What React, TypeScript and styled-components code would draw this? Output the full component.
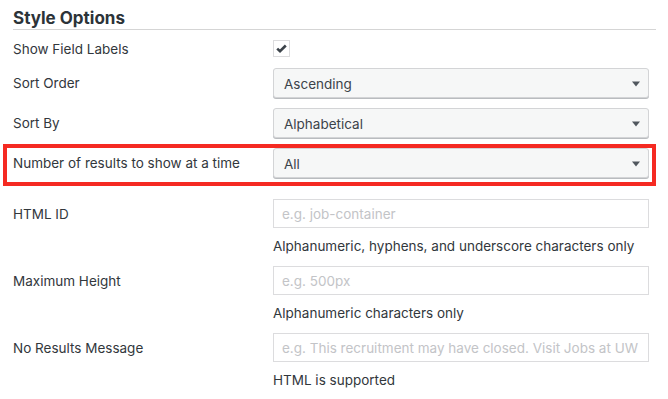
import styled, { createGlobalStyle } from 'styled-components';

const GlobalStyle = createGlobalStyle`
  body {
    margin: 0;
    background: #fff;
    font-family: Inter, "Noto Sans", sans-serif;
    color: #3c434a;
  }
`;

const Panel = styled.div`
  padding: 0 12px 0 13px;
`;

const Heading = styled.h2`
  margin: 0;
  padding-top: 8px;
  padding-bottom: 1px;
  font-size: 17px;
  line-height: 20px;
  font-weight: 700;
  color: #2c3338;
  border-bottom: 1px solid #d5d5d5;
`;

const Form = styled.div`
  display: flex;
  flex-direction: column;
  gap: 10px;
  padding-top: 9px;
`;

const Row = styled.div<{ $highlight?: boolean }>`
  position: relative;
  display: grid;
  grid-template-columns: 260px 376px;
  width: 636px;
  align-items: start;
  margin-bottom: ${p => (p.$highlight ? '11px' : '0')};
  ${p =>
    p.$highlight &&
    `
    &::after {
      content: '';
      position: absolute;
      top: -4px;
      left: -10px;
      right: -7px;
      bottom: -8px;
      border: 4px solid #f52a22;
      pointer-events: none;
    }
  `}
`;

const Label = styled.div<{ $h: number }>`
  font-size: 13.5px;
  line-height: ${p => p.$h + 1}px;
  height: ${p => p.$h}px;
  white-space: nowrap;
  color: #32373c;
`;

const Control = styled.div`
  display: flex;
  flex-direction: column;
`;

const CheckCell = styled.div`
  height: 19px;
  display: flex;
  align-items: center;
`;

const CheckBox = styled.div`
  width: 17px;
  height: 17px;
  box-sizing: border-box;
  border: 1px solid #dcdcde;
  background: #fff;
  display: flex;
  align-items: center;
  justify-content: center;
`;

const SelectBox = styled.div`
  height: 30px;
  box-sizing: border-box;
  border: 1px solid #d3d4d6;
  border-radius: 3px;
  background: #f6f7f7;
  box-shadow: 0 1px 0 #b9bcbf;
  padding: 1px 8px 0 10px;
  display: flex;
  align-items: center;
  justify-content: space-between;
  font-size: 13.5px;
  color: #3c434a;
`;

const TextInput = styled.input`
  height: 29px;
  box-sizing: border-box;
  border: 1px solid #dcdcde;
  border-radius: 0;
  padding: 1px 8px 0;
  font: inherit;
  font-size: 13.5px;
  color: #3c434a;
  background: #fff;
  outline: none;
  &::placeholder {
    color: #c3c4c7;
  }
`;

const Help = styled.div`
  margin-top: 8px;
  font-size: 13.5px;
  line-height: 21px;
  height: 20px;
  white-space: nowrap;
  color: #32373c;
`;

const Arrow = () => (
  <svg width="8" height="6" viewBox="0 0 8 6">
    <path d="M0 0.5 H8 L4 5.5 Z" fill="#50575e" />
  </svg>
);

const Check = () => (
  <svg width="11" height="9" viewBox="0 0 11 9">
    <path d="M1.2 4.6 L4 7.2 L9.8 1.5" stroke="#3c434a" strokeWidth="2.6" fill="none" />
  </svg>
);

const selects = [
  { label: 'Sort Order', value: 'Ascending' },
  { label: 'Sort By', value: 'Alphabetical' },
  { label: 'Number of results to show at a time', value: 'All', highlight: true },
];

const fields = [
  { label: 'HTML ID', placeholder: 'e.g. job-container', help: 'Alphanumeric, hyphens, and underscore characters only' },
  { label: 'Maximum Height', placeholder: 'e.g. 500px', help: 'Alphanumeric characters only' },
  {
    label: 'No Results Message',
    placeholder: 'e.g. This recruitment may have closed. Visit Jobs at UW to find more opportunities.',
    help: 'HTML is supported',
  },
];

export default function App() {
  return (
    <>
      <GlobalStyle />
      <Panel>
        <Heading>Style Options</Heading>
        <Form>
          <Row>
            <Label $h={19}>Show Field Labels</Label>
            <CheckCell>
              <CheckBox>
                <Check />
              </CheckBox>
            </CheckCell>
          </Row>
          {selects.map(s => (
            <Row key={s.label} $highlight={s.highlight}>
              <Label $h={30}>{s.label}</Label>
              <SelectBox>
                <span>{s.value}</span>
                <Arrow />
              </SelectBox>
            </Row>
          ))}
          {fields.map(f => (
            <Row key={f.label}>
              <Label $h={29}>{f.label}</Label>
              <Control>
                <TextInput placeholder={f.placeholder} />
                <Help>{f.help}</Help>
              </Control>
            </Row>
          ))}
        </Form>
      </Panel>
    </>
  );
}
